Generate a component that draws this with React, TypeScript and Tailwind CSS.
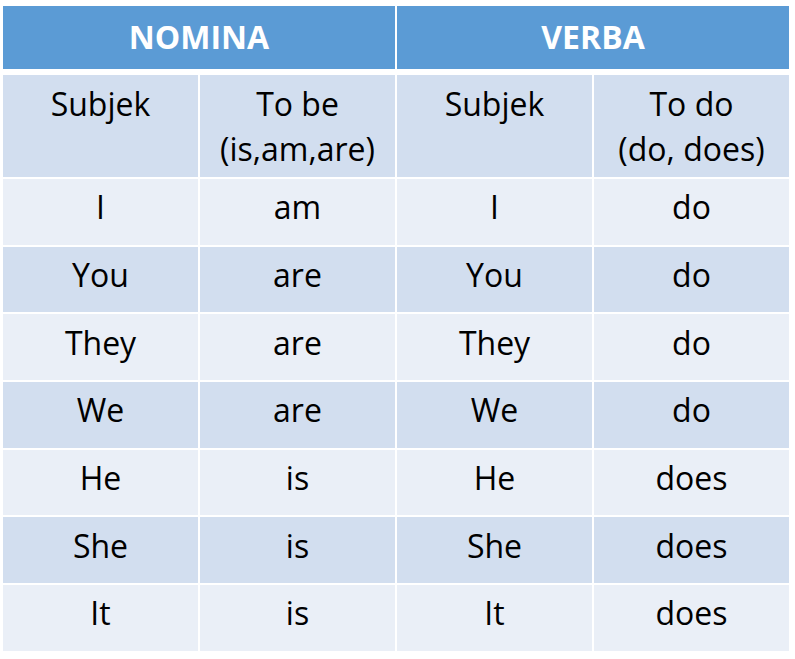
const rows = [
  ["I", "am", "I", "do"],
  ["You", "are", "You", "do"],
  ["They", "are", "They", "do"],
  ["We", "are", "We", "do"],
  ["He", "is", "He", "does"],
  ["She", "is", "She", "does"],
  ["It", "is", "It", "does"],
];

export default function App() {
  return (
    <div className="w-[795px] h-[659px] bg-white pt-[6px] pl-[3px] font-['Open_Sans','Lato',sans-serif] text-black">
      <div className="grid w-[786px] grid-cols-4 gap-x-[2px]">
        {/* Kepala tabel */}
        <div className="col-span-2 flex h-[63px] items-center justify-center bg-[#5b9bd5] pb-[2px] text-[32px] font-bold text-white">
          NOMINA
        </div>
        <div className="col-span-2 flex h-[63px] items-center justify-center bg-[#5b9bd5] pb-[2px] text-[32px] font-bold text-white">
          VERBA
        </div>

        {/* Sub kepala */}
        <div className="col-span-4 h-[6px]" />
        <div className="h-[102px] bg-[#d2deef] pt-[6px] text-center text-[32px] leading-[45px]">Subjek</div>
        <div className="h-[102px] bg-[#d2deef] pt-[6px] text-center text-[32px] leading-[45px]">
          To be
          <br />
          (is,am,are)
        </div>
        <div className="h-[102px] bg-[#d2deef] pt-[6px] text-center text-[32px] leading-[45px]">Subjek</div>
        <div className="h-[102px] bg-[#d2deef] pt-[6px] text-center text-[32px] leading-[45px]">
          To do
          <br />
          (do, does)
        </div>

        {rows.map((row, i) => (
          <div key={i} className="col-span-4 grid grid-cols-4 gap-x-[2px] pt-[2px]">
            {row.map((cell, j) => (
              <div
                key={j}
                className={
                  i % 2 === 0
                    ? "flex h-[65.7px] items-center justify-center bg-[#eaeff7] pb-[9px] text-[32px]"
                    : "flex h-[65.7px] items-center justify-center bg-[#d2deef] pb-[9px] text-[32px]"
                }
              >
                {cell}
              </div>
            ))}
          </div>
        ))}
      </div>
    </div>
  );
}
